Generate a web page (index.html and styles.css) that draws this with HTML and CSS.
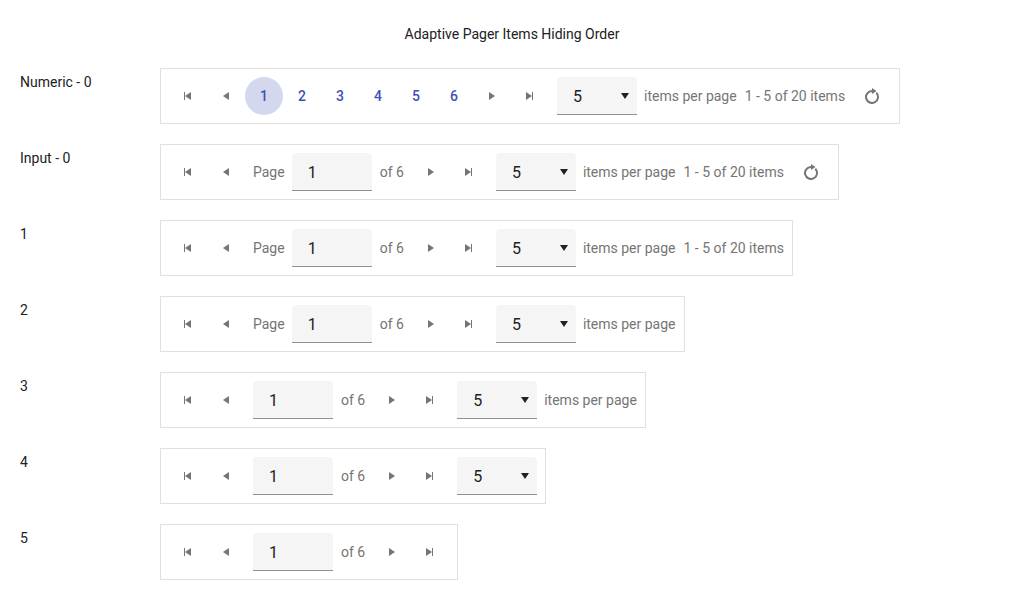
FILE: index.html
```
<!DOCTYPE html>
<html lang="en">
<head>
<meta charset="utf-8">
<title>Adaptive Pager Items Hiding Order</title>
<link rel="stylesheet" href="styles.css">
</head>
<body>
<svg class="sprite" aria-hidden="true">
  <symbol id="first" viewBox="0 0 16 16"><path d="M4 4h1v4l6-4v8L5 8v4H4z"/></symbol>
  <symbol id="prev" viewBox="0 0 16 16"><path d="M11 4v8L5 8z"/></symbol>
  <symbol id="next" viewBox="0 0 16 16"><path d="M5 4v8l6-4z"/></symbol>
  <symbol id="last" viewBox="0 0 16 16"><path d="M11 4h-1v4L4 4v8l6-4v4h1z"/></symbol>
  <symbol id="caret" viewBox="0 0 16 16"><path d="M4 5h8l-4 6z"/></symbol>
  <symbol id="refresh" viewBox="0 0 16 16"><path d="M13 4.1 11.6 5.500A5 5 0 1 1 8 4v2l4.500-3L8 0v2a7 7 0 1 0 5 2.100z"/></symbol>
</svg>
<main class="page">
  <h1 class="title">Adaptive Pager Items Hiding Order</h1>
  <div class="rows" id="rows"></div>
</main>
<script src="script.js"></script>
</body>
</html>
```
FILE: styles.css
```
*, *::before, *::after { box-sizing: border-box; }
body {
  margin: 0;
  background: #fff;
  color: #212121;
  font: 14px/28px Roboto, sans-serif;
}
.sprite { display: none; }
.page {
  display: flex;
  flex-direction: column;
  gap: 20px;
  padding: 20px;
}
.title {
  margin: 0;
  font-size: 14px;
  font-weight: 400;
  text-align: center;
}
.rows { display: grid; gap: 20px; }
.row {
  display: grid;
  grid-template-columns: 140px 1fr;
  align-items: start;
}
.row-name { margin: 0; font: inherit; }
.pager {
  display: flex;
  align-items: center;
  gap: 8px;
  justify-self: start;
  padding: 8px;
  border: 1px solid #e0e0e0;
  color: #757575;
  white-space: nowrap;
}
.buttons, .page-entry, .sizes { display: flex; align-items: center; }
.sizes { gap: 7px; }
.page-entry label { margin-right: 7px; }
.page-entry .field { margin-right: 8px; }
.button {
  display: flex;
  align-items: center;
  justify-content: center;
  width: 38px;
  height: 38px;
  padding: 0;
  border: 0;
  border-radius: 50%;
  background: none;
  color: inherit;
  font: inherit;
}
.number { color: #3f51b5; font-weight: 500; }
.current { background: #d4d8ee; }
.icon { width: 16px; height: 16px; fill: currentColor; }
.field {
  width: 80px;
  height: 38px;
  padding: 1px 16px 0;
  border: 0;
  border-bottom: 1px solid #919191;
  border-radius: 4px 4px 0 0;
  background: #f5f5f5;
  color: #212121;
  font: 16px/24px Roboto, sans-serif;
  appearance: none;
}
.picker { display: grid; align-items: center; }
.picker > * { grid-area: 1 / 1; }
.picker .field { padding-top: 2px; }
.picker .icon {
  justify-self: end;
  margin-right: 4px;
  color: #212121;
  pointer-events: none;
}
```
FILE: script.js
```
const icon = (name) => `<svg class="icon" aria-hidden="true"><use href="#${name}"/></svg>`;
const button = (name, label) =>
  `<button class="button" type="button" aria-label="${label}">${icon(name)}</button>`;

const numbers = () => [1, 2, 3, 4, 5, 6].map((n) =>
  `<button class="button number${n === 1 ? ' current' : ''}" type="button">${n}</button>`).join('');

const entry = (id, withLabel) => `<div class="page-entry">
  ${withLabel ? `<label for="page-${id}">Page</label>` : ''}
  <input class="field" id="page-${id}" type="text" value="1" aria-label="Page">
  <span>of 6</span></div>`;

const sizes = (id, withLabel) => `<div class="sizes"><div class="picker">
  <select class="field" id="size-${id}" aria-label="items per page"><option>5</option><option>10</option><option>20</option></select>
  ${icon('caret')}</div>
  ${withLabel ? `<label for="size-${id}">items per page</label>` : ''}</div>`;

// Higher levels hide more of the optional parts.
const pager = (id, { numeric, level }) => `<nav class="pager" aria-label="Pager ${id + 1}">
  <div class="buttons">${button('first', 'First page')}${button('prev', 'Previous page')}${numeric ? numbers() + button('next', 'Next page') + button('last', 'Last page') : ''}</div>
  ${numeric ? '' : entry(id, level < 3) + `<div class="buttons">${button('next', 'Next page')}${button('last', 'Last page')}</div>`}
  ${level < 5 ? sizes(id, level < 4) : ''}
  ${level < 2 ? '<span>1 - 5 of 20 items</span>' : ''}
  ${level < 1 ? button('refresh', 'Refresh') : ''}</nav>`;

const rows = [
  { name: 'Numeric - 0', numeric: true, level: 0 },
  { name: 'Input - 0', level: 0 },
  { name: '1', level: 1 },
  { name: '2', level: 2 },
  { name: '3', level: 3 },
  { name: '4', level: 4 },
  { name: '5', level: 5 },
];

document.getElementById('rows').innerHTML = rows.map((row, id) =>
  `<section class="row"><h2 class="row-name">${row.name}</h2>${pager(id, row)}</section>`).join('');
```
